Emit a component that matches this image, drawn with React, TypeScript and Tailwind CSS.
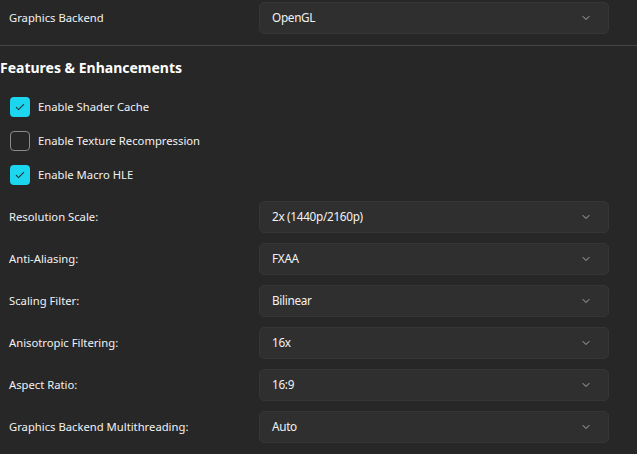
import { ChevronDown } from 'lucide-react'

const SELECTS = [
  { label: 'Resolution Scale:', value: '2x (1440p/2160p)' },
  { label: 'Anti-Aliasing:', value: 'FXAA' },
  { label: 'Scaling Filter:', value: 'Bilinear' },
  { label: 'Anisotropic Filtering:', value: '16x' },
  { label: 'Aspect Ratio:', value: '16:9' },
  { label: 'Graphics Backend Multithreading:', value: 'Auto' },
]

const CHECKS = [
  { label: 'Enable Shader Cache', checked: true },
  { label: 'Enable Texture Recompression', checked: false },
  { label: 'Enable Macro HLE', checked: true },
]

function Select({ value }: { value: string }) {
  return (
    <div className="flex h-[32px] w-[350px] shrink-0 items-center justify-between rounded-[5px] border border-[#363636] bg-[#2f2f2f] pl-[12px] pr-[16px]">
      <span className="text-[11.75px] tracking-[-0.3px] text-[#f2f2f2]">{value}</span>
      <ChevronDown className="h-[12px] w-[12px] text-[#d8d8d8]" strokeWidth={1.5} />
    </div>
  )
}

function Row({ label, value }: { label: string; value: string }) {
  return (
    <div className="flex items-center">
      <span className="w-[259px] shrink-0 pl-[9px] text-[11.25px] text-[#f2f2f2]">{label}</span>
      <Select value={value} />
    </div>
  )
}

function Checkbox({ label, checked }: { label: string; checked: boolean }) {
  return (
    <div className="flex h-[20px] items-center">
      <div
        className={
          checked
            ? 'ml-[10px] flex h-[20px] w-[20px] items-center justify-center rounded-[4px] bg-[#1cd5ef]'
            : 'ml-[10px] h-[20px] w-[20px] rounded-[4px] border border-[#8a8a8a] bg-[#262626]'
        }
      >
        {checked && (
          <svg width="10" height="8" viewBox="0 0 10 8" fill="none">
            <path d="M1 4.2 L3.6 6.6 L9 1.2" stroke="#17302a" strokeWidth="1.1" />
          </svg>
        )}
      </div>
      <span className="ml-[8px] text-[11.25px] text-[#f2f2f2]">{label}</span>
    </div>
  )
}

export default function App() {
  return (
    <div
      className="h-[454px] w-[637px] overflow-hidden bg-[#272727]"
      style={{ fontFamily: '"Noto Sans", "Open Sans", sans-serif' }}
    >
      <div className="pt-[2px]">
        <Row label="Graphics Backend" value="OpenGL" />
      </div>
      <div className="mt-[11px] h-px w-full bg-[#454545]" />

      <h2 className="mt-[12px] text-[14px] font-bold leading-[20px] text-white">
        Features &amp; Enhancements
      </h2>

      <div className="mt-[19px] flex flex-col gap-[14px]">
        {CHECKS.map((c) => (
          <Checkbox key={c.label} label={c.label} checked={c.checked} />
        ))}
      </div>

      <div className="mt-[16px] flex flex-col gap-[10px]">
        {SELECTS.map((s) => (
          <Row key={s.label} label={s.label} value={s.value} />
        ))}
      </div>
    </div>
  )
}
